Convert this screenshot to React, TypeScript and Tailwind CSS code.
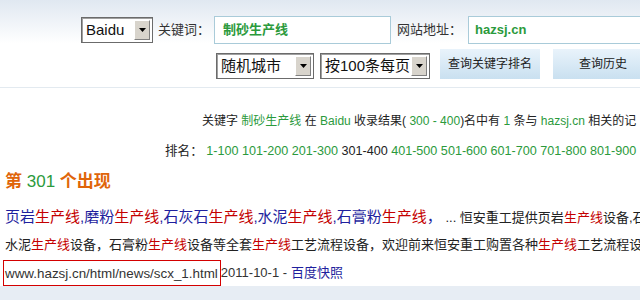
import type { ReactNode } from 'react'

const FONT = { fontFamily: '"Liberation Sans", "Noto Sans CJK SC", sans-serif' }

function Select({ label, width }: { label: string; width: string }) {
  return (
    <div className={`flex h-[26px] shrink-0 ${width} border border-[#6b6b6b] bg-white shadow-[inset_1px_1px_0_#a0a0a0]`}>
      <span className="flex-1 pl-[4px] text-[15px] leading-[24px] text-[#111] whitespace-nowrap overflow-hidden">
        {label}
      </span>
      <span className="my-[2px] mr-[2px] flex w-[16px] items-center justify-center border border-t-white border-l-white border-r-[#808080] border-b-[#808080] bg-[#d8d4cc]">
        <svg width="7" height="4" viewBox="0 0 7 4">
          <path d="M0 0h7L3.5 4z" fill="#000" />
        </svg>
      </span>
    </div>
  )
}

function G({ children }: { children: ReactNode }) {
  return <span className="text-[#2b9a3c]">{children}</span>
}

function R({ children }: { children: ReactNode }) {
  return <span className="text-[#c40000]">{children}</span>
}

export default function App() {
  return (
    <div className="w-[640px] h-[300px] overflow-hidden bg-white text-[#222]" style={FONT}>
      {/* 查询表单 */}
      <div className="h-[88px] border-b border-[#e3eaf0] bg-linear-to-b from-[#e0e8f1] via-white to-white overflow-hidden">
        <div className="flex items-center pt-[16px] pl-[81px] whitespace-nowrap">
          <Select label="Baidu" width="w-[72px]" />
          <span className="ml-[5px] text-[13px] text-[#333]">关键词：</span>
          <div className="ml-[4px] h-[28px] w-[177px] shrink-0 border border-[#a9cbd9] bg-white pl-[8px] text-[13px] font-bold leading-[26px] text-[#2b9a3c]">
            制砂生产线
          </div>
          <span className="ml-[6px] text-[13px] text-[#333]">网站地址：</span>
          <div className="ml-[6px] h-[28px] w-[200px] shrink-0 border border-[#a9cbd9] bg-white pl-[6px] text-[13px] font-bold leading-[26px] text-[#2b9a3c]">
            hazsj.cn
          </div>
        </div>
        <div className="mt-[5px] flex items-end pl-[216px] whitespace-nowrap">
          <Select label="随机城市" width="w-[98px]" />
          <div className="ml-[6px] shrink-0">
            <Select label="按100条每页" width="w-[110px]" />
          </div>
          <button className="ml-[10px] h-[30px] w-[100px] shrink-0 bg-linear-to-b from-[#e9f3fb] to-[#c9e0f0] text-[12px] text-[#222]">
            查询关键字排名
          </button>
          <button className="ml-[13px] h-[30px] w-[100px] shrink-0 bg-linear-to-b from-[#e9f3fb] to-[#c9e0f0] text-[12px] text-[#222]">
            查询历史
          </button>
        </div>
      </div>

      {/* 结果统计 */}
      <div className="pt-[25px] pl-[202px] text-[12px] leading-[16px] whitespace-nowrap text-[#222]">
        关键字 <G>制砂生产线</G> 在 <G>Baidu</G> 收录结果( <G>300 - 400</G>)名中有 <G>1</G> 条与 <G>hazsj.cn</G> 相关的记
      </div>
      <div className="pt-[14px] pl-[165px] text-[12.6px] leading-[16px] whitespace-nowrap text-[#222]">
        排名： <G>1-100 101-200 201-300</G> 301-400 <G>401-500 501-600 601-700 701-800 801-900</G>
      </div>

      <div className="pt-[13px] pl-[5px] text-[17px] font-bold leading-[20px] text-[#e0650a] whitespace-nowrap">
        第 <span className="font-normal text-[#2b9a3c]">301</span> 个出现
      </div>

      {/* 搜索结果 */}
      <div className="pt-[15px] pl-[5px] whitespace-nowrap leading-[20px]">
        <span className="text-[15px] text-[#1f1f9e]">
          页岩<R>生产线</R>,磨粉<R>生产线</R>,石灰石<R>生产线</R>,水泥<R>生产线</R>,石膏粉<R>生产线</R>，
        </span>
        <span className="text-[13px] text-[#222]">
          {' '}... 恒安重工提供页岩<R>生产线</R>设备,石
        </span>
      </div>
      <div className="pt-[8px] pl-[5px] whitespace-nowrap text-[13px] leading-[18px] text-[#222]">
        水泥<R>生产线</R>设备，石膏粉<R>生产线</R>设备等全套<R>生产线</R>工艺流程设备，欢迎前来恒安重工购置各种<R>生产线</R>工艺流程设
      </div>
      <div className="mt-[6px] flex items-center whitespace-nowrap text-[13px]">
        <span className="ml-[3px] h-[26px] border border-[#d40000] pl-[1px] pr-[2px] text-[13.4px] leading-[26px] text-[#333]">
          www.hazsj.cn/html/news/scx_1.html
        </span>
        <span className="text-[#333]">2011-10-1 - </span>
        <span className="ml-[4px] text-[#1f1f9e]">百度快照</span>
      </div>

      <div className="h-[20px] bg-[#e7edf4]" />
    </div>
  )
}
